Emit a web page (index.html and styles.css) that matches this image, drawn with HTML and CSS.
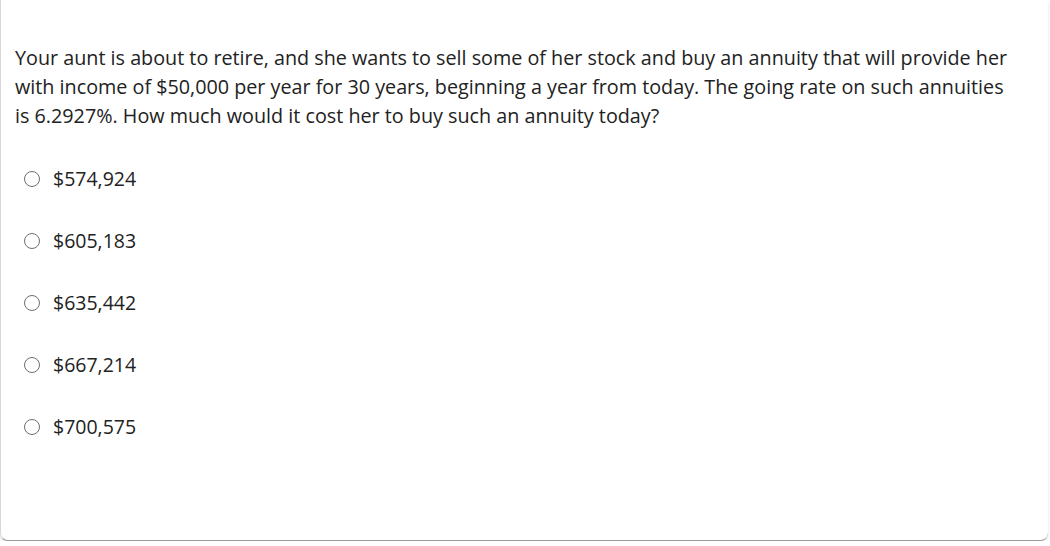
FILE: index.html
```html
<!DOCTYPE html>
<html>
<head>
<meta charset="utf-8">
<link rel="stylesheet" href="styles.css">
</head>
<body>
<div class="card">
  <p class="question">Your aunt is about to retire, and she wants to sell some of her stock and buy an annuity that will provide her with income of $50,000 per year for 30 years, beginning a year from today. The going rate on such annuities is 6.2927%. How much would it cost her to buy such an annuity today?</p>
  <ul class="options">
    <li class="option"><span class="radio"></span><span class="label">$574,924</span></li>
    <li class="option"><span class="radio"></span><span class="label">$605,183</span></li>
    <li class="option"><span class="radio"></span><span class="label">$635,442</span></li>
    <li class="option"><span class="radio"></span><span class="label">$667,214</span></li>
    <li class="option"><span class="radio"></span><span class="label">$700,575</span></li>
  </ul>
</div>
</body>
</html>
```
FILE: styles.css
```css
html, body {
  margin: 0;
  padding: 0;
  background: #ffffff;
}
.card {
  box-sizing: border-box;
  width: 1048px;
  height: 541px;
  background: #fff;
  border-bottom: 1px solid #9a9a9a;
  border-left: 1px solid #d8d8d8;
  border-radius: 0 0 8px 8px;
  box-shadow: 0 2px 3px rgba(0,0,0,0.12);
  padding: 43px 0 0 14px;
  font-family: "Open Sans", sans-serif;
  color: #222;
}
.question {
  margin: 0;
  font-size: 19.75px;
  line-height: 29px;
  padding-right: 30px;
}
.options {
  list-style: none;
  margin: 18px 0 0 0;
  padding: 0;
}
.option {
  display: flex;
  align-items: center;
  height: 62px;
}
.radio {
  width: 14px;
  height: 14px;
  border: 1.75px solid #6e6e6e;
  border-radius: 50%;
  margin-left: 9px;
  margin-right: 13px;
  flex: none;
}
.label {
  font-size: 19.5px;
  line-height: 24px;
}
```
